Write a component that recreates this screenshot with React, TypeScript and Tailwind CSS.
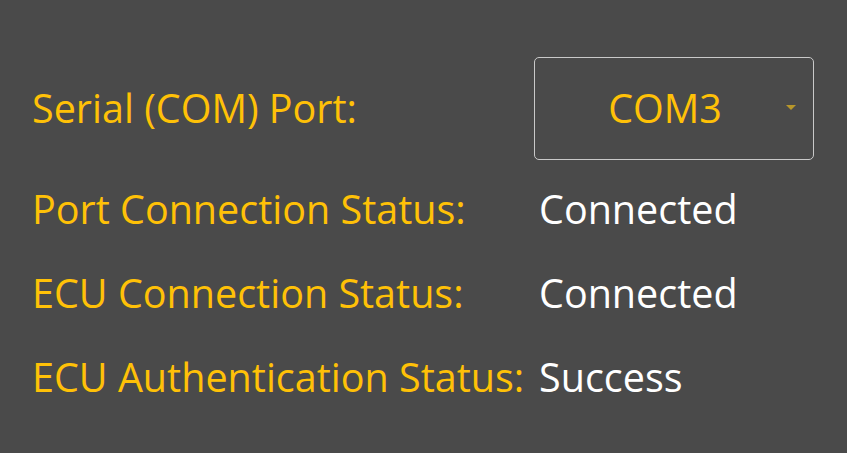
const rows = [
  { label: 'Port Connection Status:', value: 'Connected' },
  { label: 'ECU Connection Status:', value: 'Connected' },
  { label: 'ECU Authentication Status:', value: 'Success' },
];

export default function App() {
  return (
    <div className="w-[847px] h-[453px] bg-[#4a4a4a] overflow-hidden px-8 pt-[57px] font-['Open_Sans',sans-serif] text-[39.5px] leading-none">
      {/* COM port selector */}
      <div className="flex items-center h-[103px]">
        <span className="w-[502px] text-[#ffc107]">Serial (COM) Port:</span>
        <div className="relative w-[280px] h-[103px] rounded-[5px] border border-[#c9c9c9] flex items-center justify-center pr-[18px]">
          <span className="text-[#ffc107]">COM3</span>
          <svg className="absolute right-[17px] top-[47px] w-[10px] h-[5px]" viewBox="0 0 10 5">
            <path d="M0 0h10L5 5z" fill="#b8972a" />
          </svg>
        </div>
      </div>

      {/* Status rows */}
      <div className="mt-2 flex flex-col">
        {rows.map((r) => (
          <div key={r.label} className="flex items-center h-[84px]">
            <span className="w-[505px] text-[#ffc107] whitespace-nowrap">{r.label}</span>
            <span className="pl-[2px] text-white">{r.value}</span>
          </div>
        ))}
      </div>
    </div>
  );
}
